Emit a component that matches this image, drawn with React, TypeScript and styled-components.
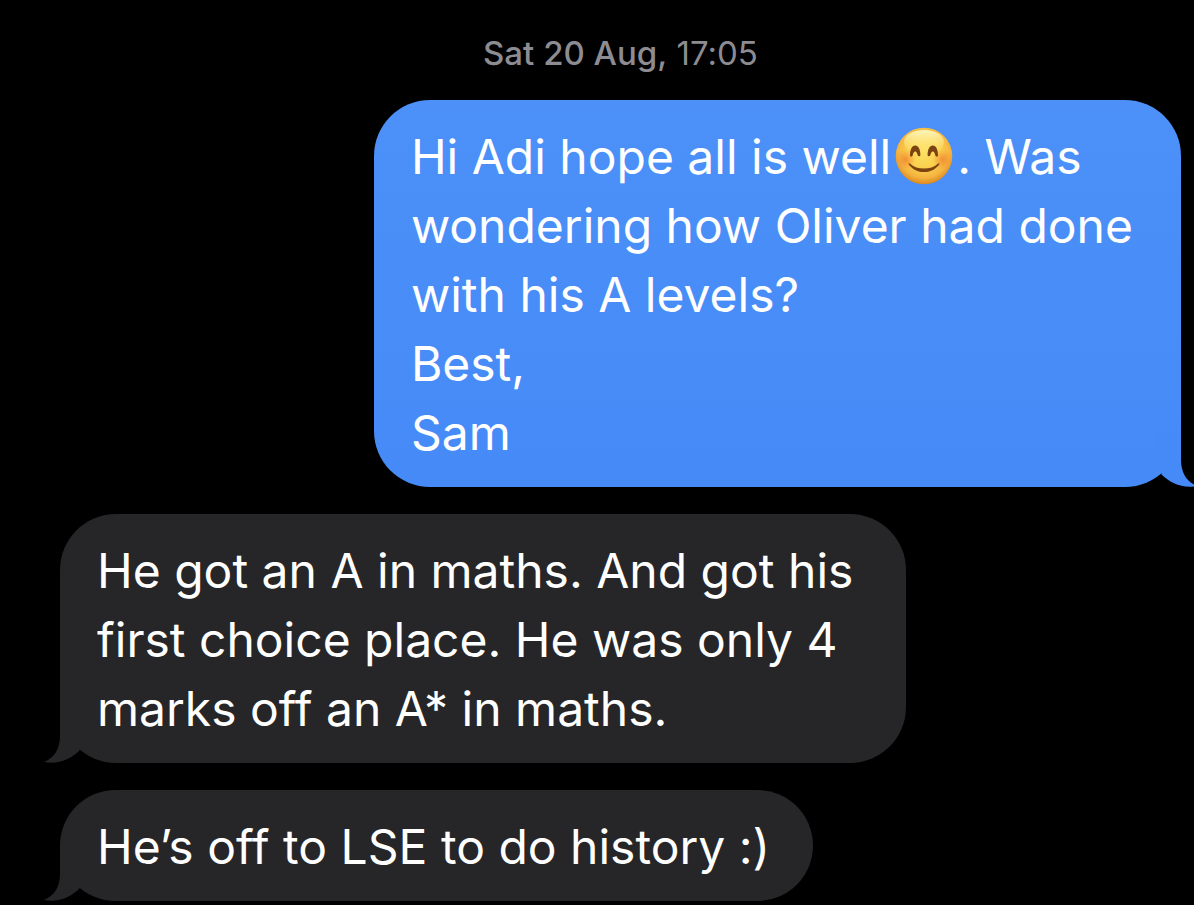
import React from "react";
import styled, { createGlobalStyle } from "styled-components";

const GlobalStyle = createGlobalStyle`
  *, *::before, *::after { box-sizing: border-box; }
  html, body { margin: 0; background: #000; }
  body {
    font-family: Inter, "Liberation Sans", sans-serif;
    font-variant-ligatures: none;
    overflow-x: clip;
  }
`;

const Thread = styled.main`
  display: flex;
  flex-direction: column;
  gap: 27px;
  padding: 33px 13px 0 60px;
  background: #000;
  overflow-x: clip;
`;

const Timestamp = styled.time`
  align-self: center;
  color: #8d8c92;
  font-size: 33px;
  line-height: 40px;
`;

const Day = styled.strong`
  font-weight: 500;
`;

type Side = "sent" | "received";

const Bubble = styled.article<{ $side: Side; $width: string }>`
  position: relative;
  align-self: ${(p) => (p.$side === "sent" ? "flex-end" : "flex-start")};
  width: ${(p) => p.$width};
  padding: 22px 0 20px 37px;
  border-radius: 56px;
  color: #fff;
  background: ${(p) =>
    p.$side === "sent" ? "linear-gradient(#4c90f8, #458af7)" : "#262628"};
`;

const Line = styled.p`
  margin: 0;
  font-size: 48px;
  line-height: 69px;
  white-space: nowrap;
`;

const TailShape = styled.svg<{ $side: Side }>`
  position: absolute;
  bottom: 0;
  ${(p) => (p.$side === "sent" ? "right: -16px; transform: scaleX(-1);" : "left: -16px;")}
  width: 40px;
  height: 56px;
  fill: ${(p) => (p.$side === "sent" ? "#458af7" : "#262628")};
`;

const EmojiShape = styled.svg`
  width: 58px;
  height: 58px;
  margin: 0 4px;
  vertical-align: -11px;
`;

function Tail({ side }: { side: Side }) {
  return (
    <TailShape $side={side} viewBox="0 0 40 56" aria-hidden="true">
      <path d="M16 0V29C16 42 10 51 0 55C14 58 27 52 35.500 43.500L40 0Z" />
    </TailShape>
  );
}

function SmilingEmoji() {
  return (
    <EmojiShape viewBox="0 0 58 58" role="img" aria-label="smiling face">
      <defs>
        <radialGradient id="face" cx="50%" cy="42%" r="58%">
          <stop offset="0" stopColor="#fde063" />
          <stop offset="0.5" stopColor="#fad04e" />
          <stop offset="0.8" stopColor="#f4b440" />
          <stop offset="1" stopColor="#dd8820" />
        </radialGradient>
        <linearGradient id="shine" x1="0" y1="0" x2="0" y2="1">
          <stop offset="0" stopColor="#fffbc8" stopOpacity="0.9" />
          <stop offset="1" stopColor="#fff08a" stopOpacity="0" />
        </linearGradient>
        <radialGradient id="blush">
          <stop offset="0" stopColor="#f07a2c" stopOpacity="0.7" />
          <stop offset="1" stopColor="#f07a2c" stopOpacity="0" />
        </radialGradient>
      </defs>
      <circle cx="29" cy="29" r="28.300" fill="url(#face)" />
      <ellipse cx="29" cy="15" rx="20" ry="12" fill="url(#shine)" />
      <circle cx="10.500" cy="32.500" r="10" fill="url(#blush)" />
      <circle cx="47.500" cy="32.500" r="10" fill="url(#blush)" />
      <g fill="#7b4311">
        <path d="M15 28.500C15 22.500 17 18.500 20.200 18.500S25.400 22.500 25.400 28C25.400 29.500 23.200 29.800 22.700 28.300C22 25.800 21.500 24.600 20.200 24.600S18.400 26 17.600 28.600C17.200 30 15 30 15 28.500Z" />
        <path d="M32.600 28C32.600 22.500 34.600 18.500 37.800 18.500S43 22.500 43 28.500C43 30 40.800 30 40.400 28.600C39.600 26 39.100 24.600 37.800 24.600S36 25.800 35.300 28.300C34.800 29.800 32.600 29.500 32.600 28Z" />
        <path d="M14.800 36.400C22 43.300 36 43.300 43.200 36.400C44 35.700 44.800 36.500 44.200 37.400C37 47.600 21 47.600 13.800 37.400C13.200 36.500 14 35.700 14.800 36.400Z" />
      </g>
    </EmojiShape>
  );
}

export default function App() {
  return (
    <>
      <GlobalStyle />
      <Thread>
        <Timestamp dateTime="17:05">
          <Day>Sat 20 Aug,</Day> 17:05
        </Timestamp>
        <Bubble $side="sent" $width="72%">
          <Line>
            Hi Adi hope all is well
            <SmilingEmoji />. Was
          </Line>
          <Line>wondering how Oliver had done</Line>
          <Line>with his A levels?</Line>
          <Line>Best,</Line>
          <Line>Sam</Line>
          <Tail side="sent" />
        </Bubble>
        <Bubble $side="received" $width="75.5%">
          <Line>He got an A in maths. And got his</Line>
          <Line>first choice place. He was only 4</Line>
          <Line>marks off an A* in maths.</Line>
          <Tail side="received" />
        </Bubble>
        <Bubble $side="received" $width="67.2%">
          <Line>He’s off to LSE to do history :)</Line>
          <Tail side="received" />
        </Bubble>
      </Thread>
    </>
  );
}
